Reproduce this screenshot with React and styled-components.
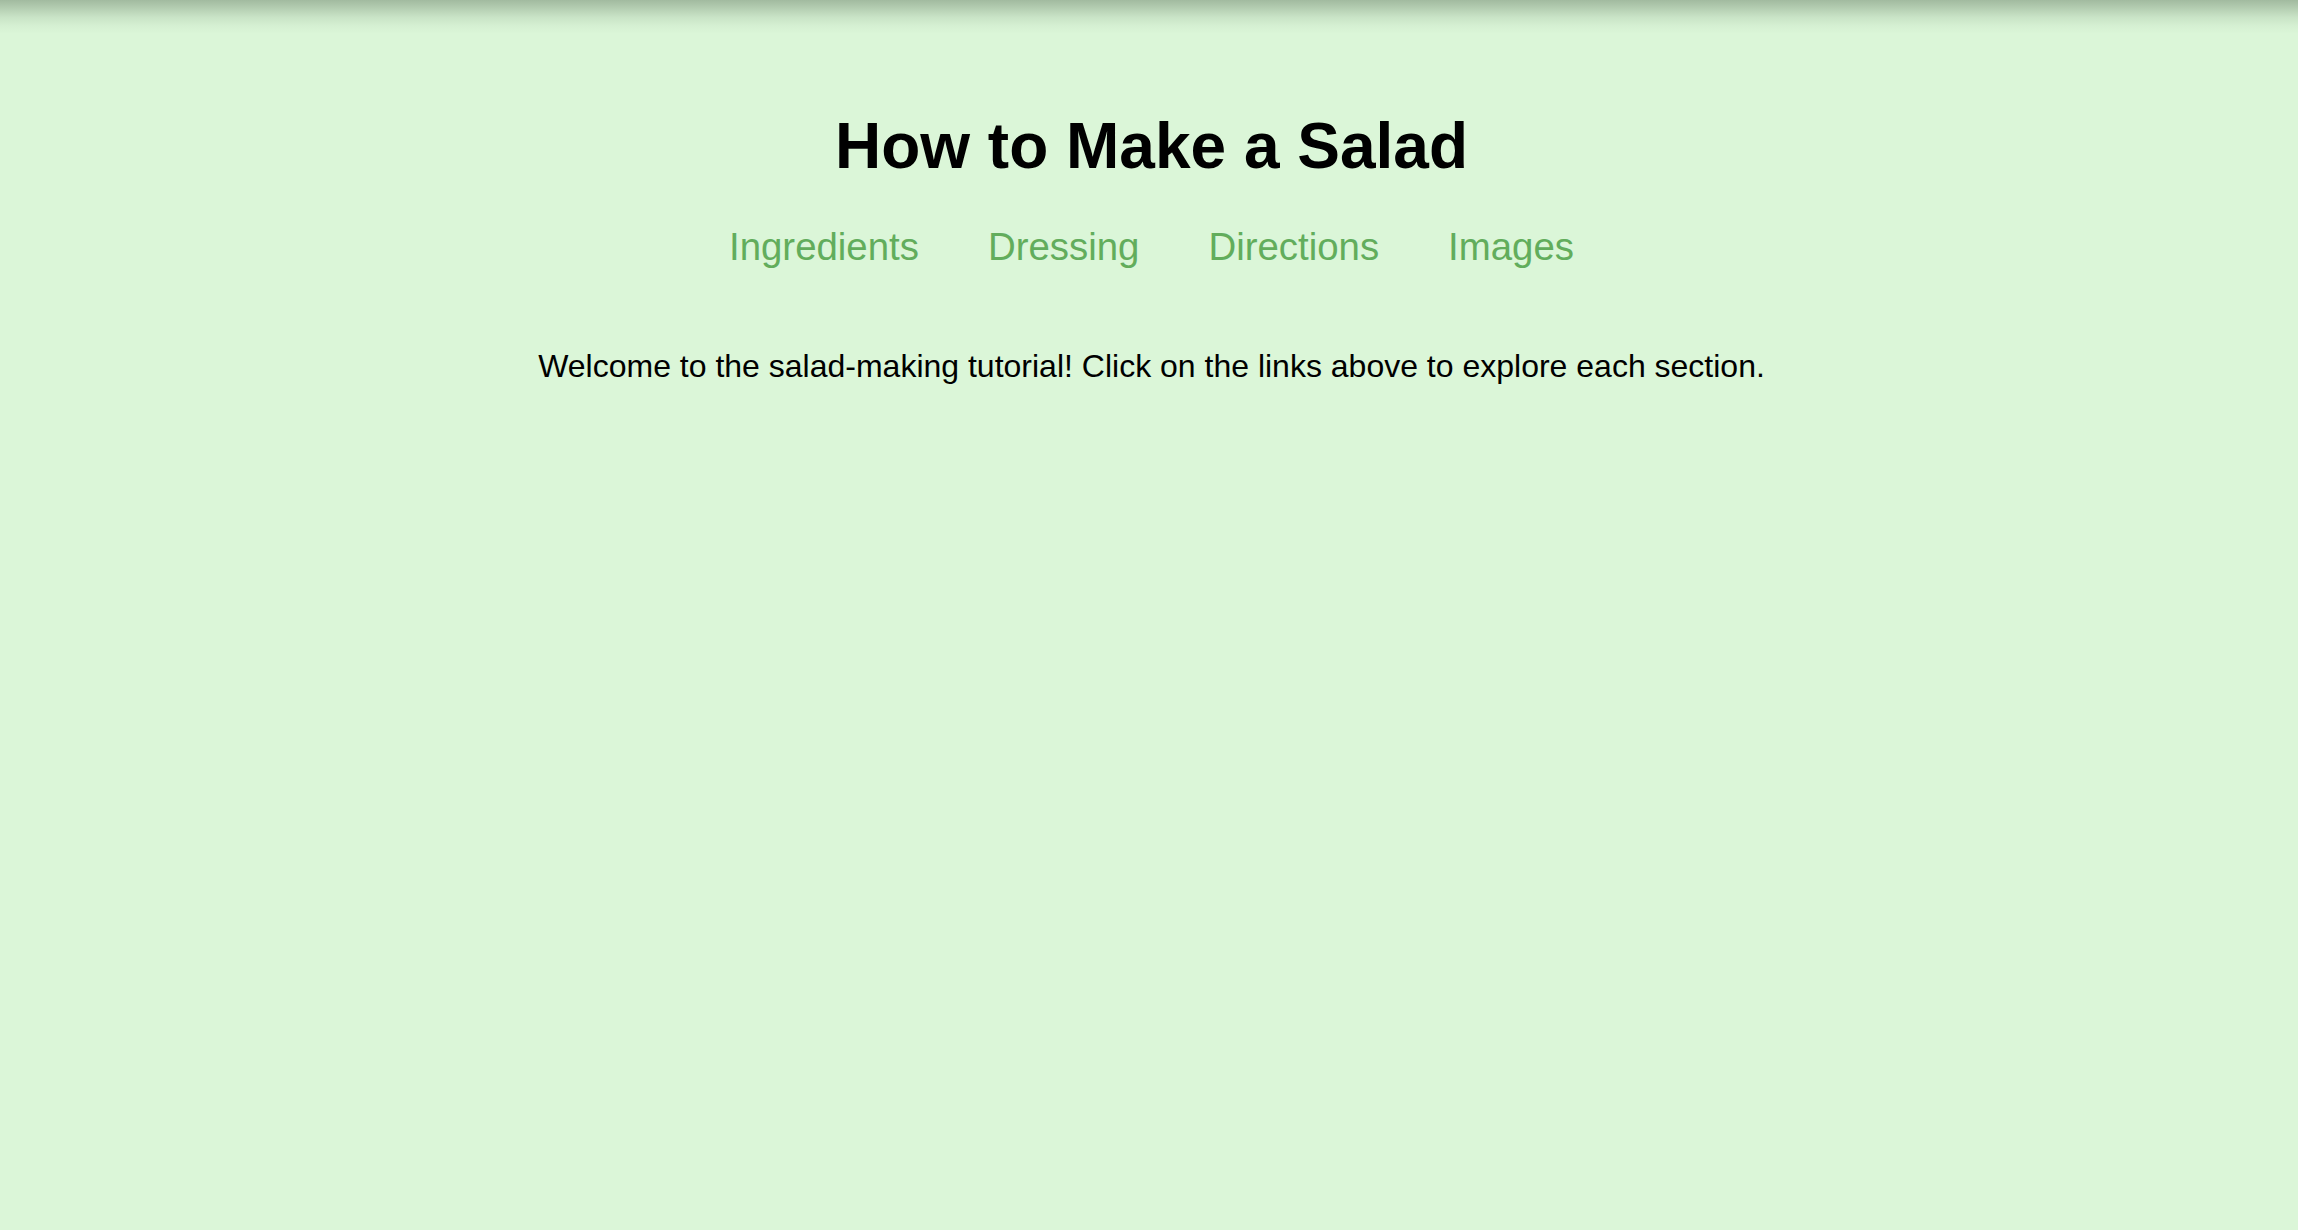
import React from "react";
import styled, { createGlobalStyle } from "styled-components";

const GlobalStyle = createGlobalStyle`
  html, body {
    margin: 0;
    padding: 0;
    background: #dbf6d8;
  }
  body {
    font-family: "Liberation Sans", Arial, Helvetica, sans-serif;
  }
`;

const Page = styled.div`
  min-height: 100vh;
  box-sizing: border-box;
  padding-left: 5px;
  background:
    linear-gradient(
      to bottom,
      rgba(40, 60, 40, 0.32) 0px,
      rgba(40, 60, 40, 0.22) 8px,
      rgba(40, 60, 40, 0.1) 17px,
      rgba(40, 60, 40, 0.03) 26px,
      rgba(40, 60, 40, 0) 34px
    ),
    #dbf6d8;
  background-repeat: no-repeat;
  font-family: "Liberation Sans", Arial, Helvetica, sans-serif;
  color: #000;
  text-align: center;
`;

const Header = styled.header`
  padding-top: 109px;
  display: flex;
  flex-direction: column;
  align-items: center;
`;

const Title = styled.h1`
  margin: 0 0 42px;
  font-size: 64px;
  font-weight: 700;
  line-height: normal;
`;

const Nav = styled.nav`
  display: flex;
  justify-content: center;
  gap: 69px;
`;

const NavLink = styled.a`
  font-size: 38.4px;
  line-height: normal;
  color: #62ad5c;
  text-decoration: none;
  cursor: pointer;
`;

const Main = styled.main`
  padding-top: 79px;
`;

const Intro = styled.p`
  margin: 0;
  font-size: 32px;
  line-height: normal;
`;

const links = ["Ingredients", "Dressing", "Directions", "Images"];

export default function App() {
  return (
    <>
      <GlobalStyle />
      <Page>
        <Header>
          <Title>How to Make a Salad</Title>
          <Nav>
            {links.map((l) => (
              <NavLink key={l} href={`#${l.toLowerCase()}`}>
                {l}
              </NavLink>
            ))}
          </Nav>
        </Header>
        <Main>
          <Intro>
            Welcome to the salad-making tutorial! Click on the links above to explore each section.
          </Intro>
        </Main>
      </Page>
    </>
  );
}
